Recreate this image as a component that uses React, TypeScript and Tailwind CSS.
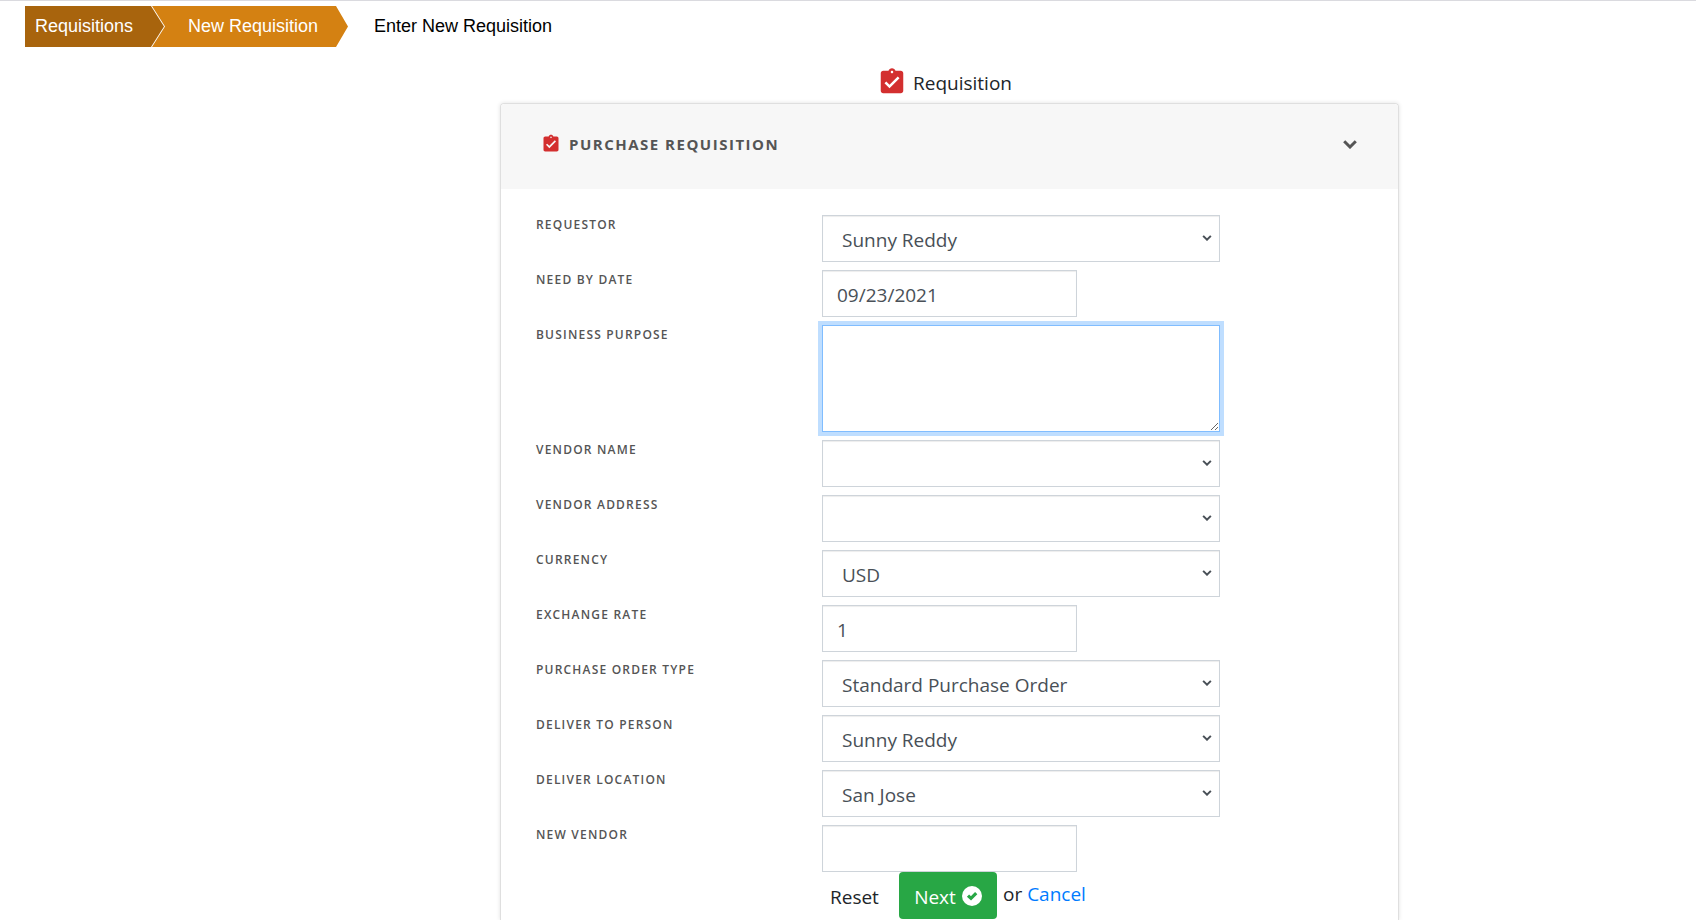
import React from "react";
import { MdAssignmentTurnedIn } from "react-icons/md";

type Field = {
  id: string;
  label: string;
  kind: "select" | "input" | "textarea";
  value: string;
};

const fields: Field[] = [
  { id: "requestor", label: "Requestor", kind: "select", value: "Sunny Reddy" },
  { id: "need-by", label: "Need By Date", kind: "input", value: "09/23/2021" },
  { id: "purpose", label: "Business Purpose", kind: "textarea", value: "" },
  { id: "vendor-name", label: "Vendor Name", kind: "select", value: "" },
  { id: "vendor-address", label: "Vendor Address", kind: "select", value: "" },
  { id: "currency", label: "Currency", kind: "select", value: "USD" },
  { id: "rate", label: "Exchange Rate", kind: "input", value: "1" },
  { id: "po-type", label: "Purchase Order Type", kind: "select", value: "Standard Purchase Order" },
  { id: "deliver-person", label: "Deliver To Person", kind: "select", value: "Sunny Reddy" },
  { id: "deliver-location", label: "Deliver Location", kind: "select", value: "San Jose" },
  { id: "new-vendor", label: "New Vendor", kind: "input", value: "" },
];

function Chevron({ className }: { className: string }) {
  return (
    <svg viewBox="0 0 14 9" fill="none" aria-hidden="true" className={className}>
      <path d="M1.2 1.3 7 7l5.8-5.7" stroke="currentColor" strokeWidth="3" />
    </svg>
  );
}

function CheckCircle() {
  return (
    <svg viewBox="0 0 20 20" aria-hidden="true" className="size-5">
      <circle cx="10" cy="10" r="10" fill="#fff" />
      <path d="m6 9.6 3 2.8 5.2-5.2" fill="none" stroke="#28a745" strokeWidth="3.2" />
    </svg>
  );
}

function Control({ field }: { field: Field }) {
  if (field.kind === "select") {
    return (
      <div className="relative">
        <select
          id={field.id}
          defaultValue={field.value}
          className="block h-[47px] w-full appearance-none border border-[#ced4da] bg-white pt-[3px] pr-8 pl-[19px] text-[19px] text-[#495057] shadow-[inset_0_1px_1px_rgba(0,0,0,0.075)]"
        >
          <option value={field.value}>{field.value}</option>
        </select>
        <Chevron className="pointer-events-none absolute top-5 right-2 h-[6px] w-[10px] text-[#495057]" />
      </div>
    );
  }
  if (field.kind === "textarea") {
    return (
      <textarea
        id={field.id}
        defaultValue={field.value}
        className="block h-[107px] w-full resize border border-[#80bdff] bg-white px-3.5 py-2 text-[19px] text-[#495057] shadow-[0_0_0_4px_#bfdeff] outline-none"
      />
    );
  }
  return (
    <input
      id={field.id}
      type="text"
      defaultValue={field.value}
      className="block h-[47px] w-[255px] border border-[#ced4da] bg-white px-3.5 pt-0.5 text-[19px] text-[#495057] shadow-[inset_0_1px_1px_rgba(0,0,0,0.075)]"
    />
  );
}

export default function App() {
  return (
    <div className="flex min-h-screen flex-col border-t border-[#dadadf] bg-white font-['Open_Sans','Noto_Sans',sans-serif] text-[#212529]">
      <nav
        aria-label="Breadcrumb"
        className="flex h-[46px] pt-[5px] pl-[25px] font-['Liberation_Sans',Arial,sans-serif] text-[18px] leading-[41px]"
      >
        <a
          href="#requisitions"
          className="h-[41px] w-[139px] bg-[#a8640d] pl-2.5 text-white [clip-path:polygon(0_0,126px_0,100%_50%,126px_100%,0_100%)]"
        >
          Requisitions
        </a>
        <a
          href="#new"
          className="-ml-3 h-[41px] w-[196px] bg-[#d48112] pl-9 text-white [clip-path:polygon(0_0,184px_0,100%_50%,184px_100%,0_100%,13px_50%)]"
        >
          New Requisition
        </a>
        <span className="pl-[26px] text-black">Enter New Requisition</span>
      </nav>

      <div className="grid flex-1 grid-cols-[500fr_899fr_297fr]">
        <main className="col-start-2 flex min-w-0 flex-col">
          <h1 className="flex h-14 items-end justify-center gap-1.5 pr-2.5 pb-1.5 text-[19px] leading-7">
            <MdAssignmentTurnedIn className="size-[30px] text-[#d32f2f]" />
            Requisition
          </h1>

          <section className="flex-1 rounded-t border border-b-0 border-[#dfdfdf] shadow-[0_0_4px_rgba(0,0,0,0.12)]">
            <header className="flex h-[85px] items-center rounded-t bg-[#f7f7f7] pr-[41px] pb-[5px] pl-10">
              <MdAssignmentTurnedIn className="size-5 text-[#d32f2f]" />
              <h2 className="pl-2 text-[15px] font-bold tracking-widest text-[#555] uppercase">
                Purchase Requisition
              </h2>
              <button type="button" aria-label="Collapse" className="ml-auto text-[#555]">
                <Chevron className="h-[9px] w-[14px]" />
              </button>
            </header>

            <form className="px-[35px] pt-[26px]">
              <div className="flex flex-col gap-2">
                {fields.map((field) => (
                  <div key={field.id} className="grid grid-cols-[286fr_398fr_143fr]">
                    <label
                      htmlFor={field.id}
                      className="text-[12px] leading-[19px] font-semibold tracking-widest text-[#555] uppercase"
                    >
                      {field.label}
                    </label>
                    <Control field={field} />
                  </div>
                ))}
              </div>
              <div className="grid grid-cols-[286fr_541fr] text-[19px]">
                <div className="col-start-2 flex items-center">
                  <button type="reset" className="w-[77px] pt-[3px] pl-2 text-left">
                    Reset
                  </button>
                  <button
                    type="button"
                    className="flex h-[47px] w-[98px] items-center justify-center gap-1.5 rounded bg-[#28a745] text-white"
                  >
                    <span className="pt-[3px]">Next</span>
                    <CheckCircle />
                  </button>
                  <span className="pb-0.5 pl-1.5">
                    or{" "}
                    <a href="#cancel" className="text-[#007bff]">
                      Cancel
                    </a>
                  </span>
                </div>
              </div>
            </form>
          </section>
        </main>
      </div>
    </div>
  );
}
